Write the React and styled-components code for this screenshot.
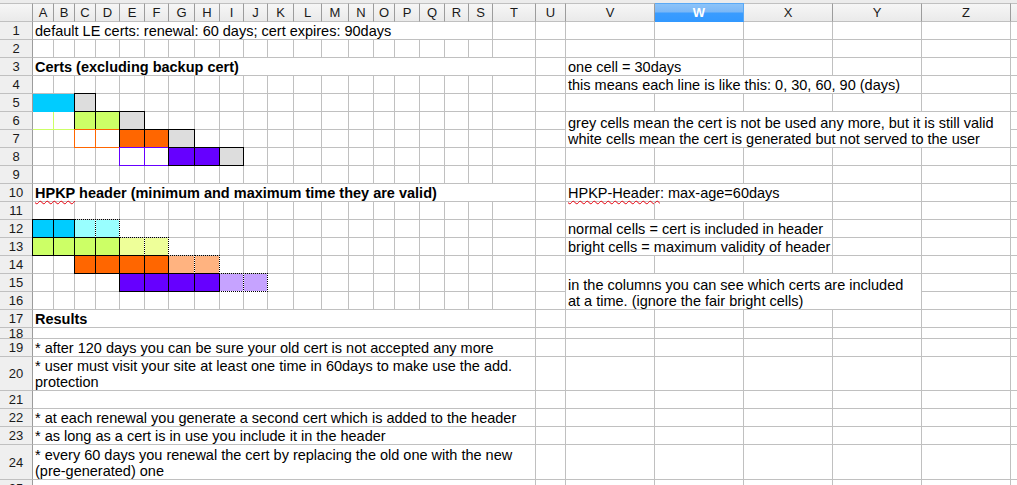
import React from "react";
import styled, { createGlobalStyle } from "styled-components";

const GRID = "#c0c0c0";
const CYAN = "#00ccff";
const LCYAN = "#99ffff";
const LIME = "#ccff66";
const LLIME = "#eeff99";
const ORANGE = "#ff6600";
const LORANGE = "#ffb380";
const PURPLE = "#6600ff";
const LPURPLE = "#c6a3ff";
const GREY = "#dddddd";
const BLACK = "#000000";

const COLS = [
  ["A", 21], ["B", 21], ["C", 21], ["D", 24], ["E", 25], ["F", 24], ["G", 26],
  ["H", 25], ["I", 24], ["J", 24], ["K", 26], ["L", 28], ["M", 27], ["N", 25],
  ["O", 21], ["P", 25], ["Q", 25], ["R", 24], ["S", 24], ["T", 43], ["U", 30],
  ["V", 89], ["W", 89], ["X", 89], ["Y", 89], ["Z", 89], ["AA", 89],
];

const ROW_HEIGHTS = [
  18, 18, 18, 18, 18, 18, 18, 18, 18, 18, 18, 18, 18, 18, 18, 18, 18,
  11, 18, 34, 18, 18, 18, 35, 18,
];

const GlobalStyle = createGlobalStyle`
  html, body { margin: 0; padding: 0; background: #ffffff; overflow: hidden; }
  body { width: 1017px; height: 485px; }
`;

const Page = styled.div`
  width: 1017px;
  height: 485px;
  overflow: hidden;
  background: #ffffff;
  font-family: "Liberation Sans", Arial, sans-serif;
  color: #000;
`;

const TopStrip = styled.div`
  height: 3px;
  background: #ececec;
`;

const Sheet = styled.div`
  display: grid;
  grid-template-columns: 33px ${COLS.map(([, w]) => `${w}px`).join(" ")};
  grid-template-rows: 19px ${ROW_HEIGHTS.map((h) => `${h}px`).join(" ")};
`;

const Corner = styled.div`
  box-sizing: border-box;
  border-top: 1px solid ${GRID};
  border-right: 1px solid #9c9c9c;
  border-bottom: 1px solid ${GRID};
  background: linear-gradient(#f6f6f6, #eaeaea);
`;

const ColHead = styled.div`
  box-sizing: border-box;
  border-top: 1px solid ${(p) => (p.$sel ? "#5aa9f5" : GRID)};
  border-right: 1px solid ${(p) => (p.$sel ? "#5aa9f5" : "#9c9c9c")};
  border-bottom: 1px solid ${(p) => (p.$sel ? "#3399ff" : GRID)};
  background: ${(p) =>
    p.$sel
      ? "linear-gradient(#8cc3f9 0%, #7ab7f6 48%, #3a9cff 52%, #3399ff 100%)"
      : "linear-gradient(#f6f6f6, #eaeaea)"};
  color: ${(p) => (p.$sel ? "#ffffff" : "#1a1a1a")};
  font-weight: ${(p) => (p.$sel ? 700 : 400)};
  font-size: 13px;
  display: flex;
  align-items: center;
  justify-content: center;
  overflow: hidden;
  white-space: nowrap;
`;

const RowHead = styled.div`
  box-sizing: border-box;
  border-right: 1px solid #9c9c9c;
  border-bottom: 1px solid ${GRID};
  background: #efefef;
  color: #1a1a1a;
  font-size: 13px;
  display: flex;
  align-items: center;
  justify-content: center;
  overflow: hidden;
  white-space: nowrap;
`;

const Cell = styled.div`
  grid-column: span ${(p) => p.$span || 1};
  grid-row: span ${(p) => p.$rows || 1};
  box-sizing: border-box;
  min-width: 0;
  border-right: 1px solid ${GRID};
  border-bottom: 1px solid ${GRID};
  display: flex;
  flex-direction: column;
  justify-content: flex-end;
  padding: 0 2px;
  font-size: 14.5px;
  line-height: 16px;
  font-weight: ${(p) => (p.$bold ? 700 : 400)};
  white-space: nowrap;
`;

const FillCell = styled(Cell)`
  background: ${(p) => p.$bg};
  border-right-color: ${(p) => p.$bg};
  border-bottom-color: ${(p) => p.$bg};
`;

const EdgeCell = styled(Cell)`
  border-right-color: ${(p) => p.$line};
  border-bottom-color: ${(p) => p.$line};
`;

const BoxCell = styled(Cell)`
  position: relative;
  z-index: 1;
  margin: -1px 0 0 -1px;
  border: 1px ${(p) => (p.$dotted ? "dotted" : "solid")} ${(p) => p.$line};
  background: ${(p) => p.$bg};
  background-clip: padding-box;
`;

const Line = styled.div`
  & + & {
    margin-top: ${(p) => p.$gap}px;
  }
`;

const Misspelled = styled.span`
  text-decoration: underline wavy #e8000b;
  text-decoration-thickness: 1px;
  text-decoration-skip-ink: none;
  text-underline-offset: 2px;
`;

const ROWS = {
  1: [{ c: 1, span: 19, text: "default LE certs: renewal: 60 days; cert expires: 90days" }],
  3: [
    { c: 1, span: 20, bold: true, text: "Certs (excluding backup cert)" },
    { c: 22, span: 2, text: "one cell = 30days" },
  ],
  4: [{ c: 22, span: 4, text: "this means each line is like this: 0, 30, 60, 90 (days)" }],
  5: [
    { c: 1, kind: "fill", bg: CYAN },
    { c: 2, kind: "fill", bg: CYAN },
    { c: 3, kind: "box", bg: GREY, line: BLACK },
  ],
  6: [
    { c: 1, kind: "edge", line: LIME },
    { c: 2, kind: "edge", line: LIME },
    { c: 3, kind: "box", bg: LIME, line: BLACK },
    { c: 4, kind: "box", bg: LIME, line: BLACK },
    { c: 5, kind: "box", bg: GREY, line: BLACK },
    {
      c: 22,
      span: 5,
      rows: 2,
      gap: 2,
      lines: [
        "grey cells mean the cert is not be used any more, but it is still valid",
        "white cells mean the cert is generated but not served to the user",
      ],
    },
  ],
  7: [
    { c: 3, kind: "box", bg: "#ffffff", line: ORANGE },
    { c: 4, kind: "box", bg: "#ffffff", line: ORANGE },
    { c: 5, kind: "box", bg: ORANGE, line: BLACK },
    { c: 6, kind: "box", bg: ORANGE, line: BLACK },
    { c: 7, kind: "box", bg: GREY, line: BLACK },
  ],
  8: [
    { c: 5, kind: "box", bg: "#ffffff", line: PURPLE },
    { c: 6, kind: "box", bg: "#ffffff", line: PURPLE },
    { c: 7, kind: "box", bg: PURPLE, line: BLACK },
    { c: 8, kind: "box", bg: PURPLE, line: BLACK },
    { c: 9, kind: "box", bg: GREY, line: BLACK },
  ],
  10: [
    {
      c: 1,
      span: 20,
      bold: true,
      node: (
        <>
          <Misspelled>HPKP</Misspelled> header (minimum and maximum time they are valid)
        </>
      ),
    },
    {
      c: 22,
      span: 3,
      node: (
        <>
          <Misspelled>HPKP-Header</Misspelled>: max-age=60days
        </>
      ),
    },
  ],
  12: [
    { c: 1, kind: "box", bg: CYAN, line: BLACK },
    { c: 2, kind: "box", bg: CYAN, line: BLACK },
    { c: 3, kind: "box", dotted: true, bg: LCYAN, line: BLACK },
    { c: 4, kind: "box", dotted: true, bg: LCYAN, line: BLACK },
    { c: 22, span: 3, text: "normal cells = cert is included in header" },
  ],
  13: [
    { c: 1, kind: "box", bg: LIME, line: BLACK },
    { c: 2, kind: "box", bg: LIME, line: BLACK },
    { c: 3, kind: "box", bg: LIME, line: BLACK },
    { c: 4, kind: "box", bg: LIME, line: BLACK },
    { c: 5, kind: "box", dotted: true, bg: LLIME, line: BLACK },
    { c: 6, kind: "box", dotted: true, bg: LLIME, line: BLACK },
    { c: 22, span: 3, text: "bright cells = maximum validity of header" },
  ],
  14: [
    { c: 3, kind: "box", bg: ORANGE, line: BLACK },
    { c: 4, kind: "box", bg: ORANGE, line: BLACK },
    { c: 5, kind: "box", bg: ORANGE, line: BLACK },
    { c: 6, kind: "box", bg: ORANGE, line: BLACK },
    { c: 7, kind: "box", dotted: true, bg: LORANGE, line: BLACK },
    { c: 8, kind: "box", dotted: true, bg: LORANGE, line: BLACK },
  ],
  15: [
    { c: 5, kind: "box", bg: PURPLE, line: BLACK },
    { c: 6, kind: "box", bg: PURPLE, line: BLACK },
    { c: 7, kind: "box", bg: PURPLE, line: BLACK },
    { c: 8, kind: "box", bg: PURPLE, line: BLACK },
    { c: 9, kind: "box", dotted: true, bg: LPURPLE, line: BLACK },
    { c: 10, kind: "box", dotted: true, bg: LPURPLE, line: BLACK },
    {
      c: 22,
      span: 4,
      rows: 2,
      gap: 2,
      lines: [
        "in the columns you can see which certs are included",
        "at a time. (ignore the fair bright cells)",
      ],
    },
  ],
  17: [{ c: 1, span: 20, bold: true, text: "Results" }],
  18: [{ c: 1, span: 20 }],
  19: [{ c: 1, span: 20, text: "* after 120 days you can be sure your old cert is not accepted any more" }],
  20: [
    {
      c: 1,
      span: 20,
      gap: 0,
      lines: [
        "* user must visit your site at least one time in 60days to make use the add.",
        "protection",
      ],
    },
  ],
  21: [{ c: 1, span: 20 }],
  22: [{ c: 1, span: 20, text: "* at each renewal you generate a second cert which is added to the header" }],
  23: [{ c: 1, span: 20, text: "* as long as a cert is in use you include it in the header" }],
  24: [
    {
      c: 1,
      span: 20,
      gap: 0,
      lines: [
        "* every 60 days you renewal the cert by replacing the old one with the new",
        "(pre-generated) one",
      ],
    },
  ],
  25: [{ c: 1, span: 20 }],
};

const COVERED = {
  7: [22, 23, 24, 25, 26],
  16: [22, 23, 24, 25],
};

function renderContent(it) {
  if (it.lines) {
    return it.lines.map((l, i) => (
      <Line key={i} $gap={it.gap}>
        {l}
      </Line>
    ));
  }
  if (it.node) return <Line>{it.node}</Line>;
  if (it.text) return <Line>{it.text}</Line>;
  return null;
}

function renderItem(r, it) {
  const key = `${r}-${it.c}`;
  const common = { $span: it.span, $rows: it.rows, $bold: it.bold };
  if (it.kind === "fill") return <FillCell key={key} {...common} $bg={it.bg} />;
  if (it.kind === "edge") return <EdgeCell key={key} {...common} $line={it.line} />;
  if (it.kind === "box")
    return <BoxCell key={key} {...common} $bg={it.bg} $line={it.line} $dotted={it.dotted} />;
  return (
    <Cell key={key} {...common}>
      {renderContent(it)}
    </Cell>
  );
}

function renderRow(r) {
  const items = ROWS[r] || [];
  const covered = COVERED[r] || [];
  const out = [<RowHead key={`h${r}`}>{r}</RowHead>];
  let c = 1;
  while (c <= COLS.length) {
    if (covered.includes(c)) {
      c += 1;
      continue;
    }
    const it = items.find((i) => i.c === c);
    if (it) {
      out.push(renderItem(r, it));
      c += it.span || 1;
    } else {
      out.push(<Cell key={`${r}-${c}`} />);
      c += 1;
    }
  }
  return out;
}

export default function App() {
  return (
    <Page>
      <GlobalStyle />
      <TopStrip />
      <Sheet>
        <Corner />
        {COLS.map(([name]) => (
          <ColHead key={name} $sel={name === "W"}>
            {name}
          </ColHead>
        ))}
        {ROW_HEIGHTS.map((_, i) => renderRow(i + 1))}
      </Sheet>
    </Page>
  );
}
